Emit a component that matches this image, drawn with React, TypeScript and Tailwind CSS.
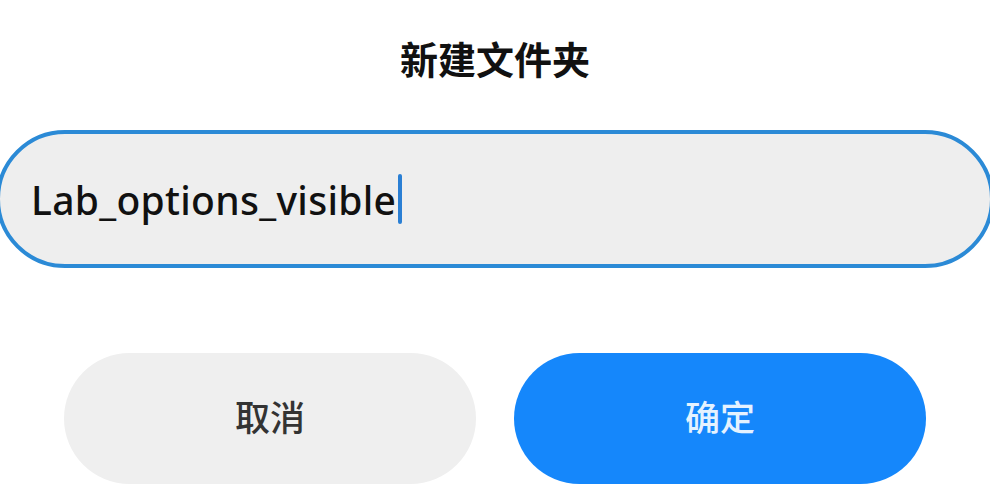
export default function App() {
  return (
    <div
      className="flex h-[500px] w-[990px] flex-col items-center overflow-hidden bg-white"
      style={{ fontFamily: '"Noto Sans", "Noto Sans CJK SC", sans-serif' }}
    >
      {/* title */}
      <h1 className="mt-[34px] text-[38px] font-bold leading-[50px] text-[#111]">新建文件夹</h1>

      {/* name input */}
      <div className="mt-[46px] flex h-[138px] w-[998px] shrink-0 items-center rounded-full border-4 border-[#2b8ad6] bg-[#eeeeee] pl-[31px]">
        <span className="text-[39px] font-medium leading-none tracking-[0.3px] text-[#111]">Lab_options_visible</span>
        <span className="ml-[2px] h-[50px] w-[4px] rounded-sm bg-[#2a7fd4]" />
      </div>

      {/* actions */}
      <div className="mt-[85px] flex gap-[38px]">
        <button className="flex h-[131px] w-[412px] items-center justify-center rounded-full bg-[#efefef] text-[35px] font-medium text-[#333]">
          取消
        </button>
        <button className="flex h-[131px] w-[412px] items-center justify-center rounded-full bg-[#1587fb] text-[35px] font-medium text-[#e4f2ff]">
          确定
        </button>
      </div>
    </div>
  );
}
